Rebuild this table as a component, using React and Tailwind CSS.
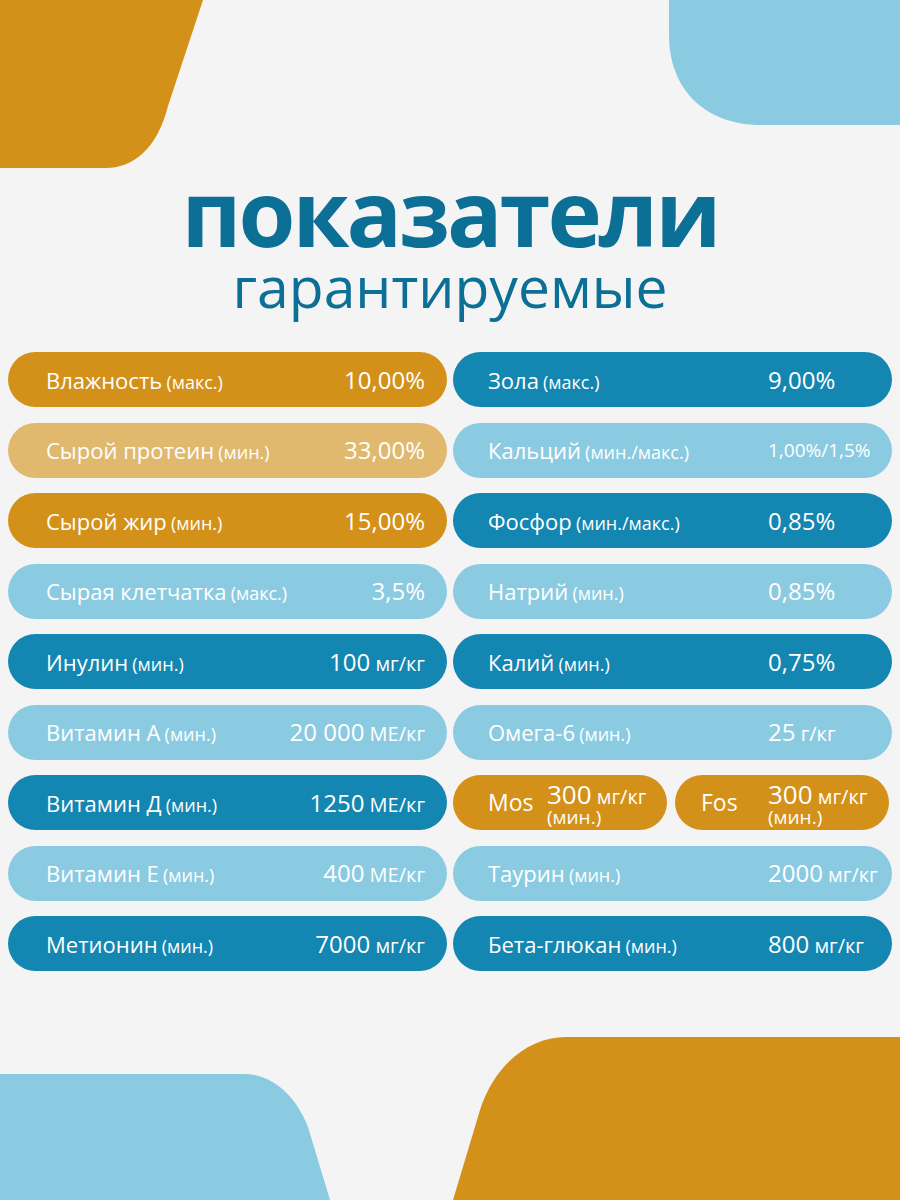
import React from 'react'

const fills = {
  gold: 'bg-[#d4911a]',
  lgold: 'bg-[#e0b96f]',
  blue: 'bg-[#1386b1]',
  lblue: 'bg-[#8bcbe2]',
}

const leftRows = [
  { label: 'Влажность', note: '(макс.)', value: '10,00%', color: 'gold' },
  { label: 'Сырой протеин', note: '(мин.)', value: '33,00%', color: 'lgold' },
  { label: 'Сырой жир', note: '(мин.)', value: '15,00%', color: 'gold' },
  { label: 'Сырая клетчатка', note: '(макс.)', value: '3,5%', color: 'lblue' },
  { label: 'Инулин', note: '(мин.)', value: '100', unit: 'мг/кг', color: 'blue' },
  { label: 'Витамин А', note: '(мин.)', value: '20 000', unit: 'МЕ/кг', color: 'lblue' },
  { label: 'Витамин Д', note: '(мин.)', value: '1250', unit: 'МЕ/кг', color: 'blue' },
  { label: 'Витамин Е', note: '(мин.)', value: '400', unit: 'МЕ/кг', color: 'lblue' },
  { label: 'Метионин', note: '(мин.)', value: '7000', unit: 'мг/кг', color: 'blue' },
]

const rightRows = [
  { label: 'Зола', note: '(макс.)', value: '9,00%', color: 'blue' },
  { label: 'Кальций', note: '(мин./макс.)', value: '1,00%/1,5%', small: true, color: 'lblue' },
  { label: 'Фосфор', note: '(мин./макс.)', value: '0,85%', color: 'blue' },
  { label: 'Натрий', note: '(мин.)', value: '0,85%', color: 'lblue' },
  { label: 'Калий', note: '(мин.)', value: '0,75%', color: 'blue' },
  { label: 'Омега-6', note: '(мин.)', value: '25', unit: 'г/кг', color: 'lblue' },
  { split: true },
  { label: 'Таурин', note: '(мин.)', value: '2000', unit: 'мг/кг', color: 'lblue' },
  { label: 'Бета-глюкан', note: '(мин.)', value: '800', unit: 'мг/кг', color: 'blue' },
]

function Label({ row }) {
  return (
    <div className="whitespace-nowrap leading-none">
      <span className="text-[22px]">{row.label}</span>{' '}
      <span className="text-[18px]">{row.note}</span>
    </div>
  )
}

function Value({ row }) {
  return (
    <div className="whitespace-nowrap leading-none">
      <span className={row.small ? 'text-[19px]' : 'text-[24px]'}>{row.value}</span>
      {row.unit && <span className="text-[20px]"> {row.unit}</span>}
    </div>
  )
}

function LeftPill({ row }) {
  return (
    <div
      className={`flex h-[55px] items-center justify-between rounded-full pl-[38px] pr-[22px] text-white ${fills[row.color]}`}
    >
      <Label row={row} />
      <Value row={row} />
    </div>
  )
}

function SmallPill({ name, nameWidth, pad }) {
  return (
    <div className={`flex h-[55px] w-[214px] min-w-0 items-center rounded-full bg-[#d4911a] text-white ${pad}`}>
      <div className={`shrink-0 text-[23px] leading-none ${nameWidth}`}>{name}</div>
      <div className="flex flex-col pt-[4px]">
        <div className="whitespace-nowrap leading-[20px]">
          <span className="text-[26px]">300</span>
          <span className="text-[20px]"> мг/кг</span>
        </div>
        <div className="text-[19px] leading-[18px]">(мин.)</div>
      </div>
    </div>
  )
}

function RightPill({ row }) {
  if (row.split) {
    return (
      <div className="flex gap-[8px]">
        <SmallPill name="Mos" nameWidth="w-[59px]" pad="pl-[35px]" />
        <SmallPill name="Fos" nameWidth="w-[67px]" pad="pl-[26px]" />
      </div>
    )
  }
  return (
    <div className={`flex h-[55px] items-center rounded-full pl-[35px] text-white ${fills[row.color]}`}>
      <div className="w-[280px] shrink-0">
        <Label row={row} />
      </div>
      <Value row={row} />
    </div>
  )
}

export default function App() {
  return (
    <div className="relative h-[1200px] w-[900px] overflow-hidden bg-[#f4f4f4] font-['Open_Sans','Noto_Sans',sans-serif]">
      {/* corner shapes */}
      <svg className="absolute inset-0" width="900" height="1200" viewBox="0 0 900 1200">
        <path d="M0 0 H203 L168 106 C157 150 132 168 106 168 H0 Z" fill="#d4911a" />
        <path d="M669 0 V35 C669 92 708 125 760 125 H900 V0 Z" fill="#8bcbe2" />
        <path d="M0 1074 H244 C274 1074 297 1098 308 1127 L330 1200 H0 Z" fill="#8bcbe2" />
        <path d="M900 1037 H566 C528 1037 494 1066 480 1110 L453 1200 H900 Z" fill="#d4911a" />
      </svg>

      <div className="relative flex flex-col items-center pt-[166px]">
        <h1 className="text-[92px] font-bold leading-none tracking-[-3px] text-[#0b6f96]">показатели</h1>
        <div className="text-[57px] leading-none text-[#0b6f96]">гарантируемые</div>
      </div>

      <div className="relative mt-[37px] grid grid-cols-2 gap-x-[6px] px-[8px]">
        <div className="flex flex-col gap-y-[15.5px]">
          {leftRows.map((row) => (
            <LeftPill key={row.label} row={row} />
          ))}
        </div>
        <div className="flex flex-col gap-y-[15.5px]">
          {rightRows.map((row, i) => (
            <RightPill key={i} row={row} />
          ))}
        </div>
      </div>
    </div>
  )
}
